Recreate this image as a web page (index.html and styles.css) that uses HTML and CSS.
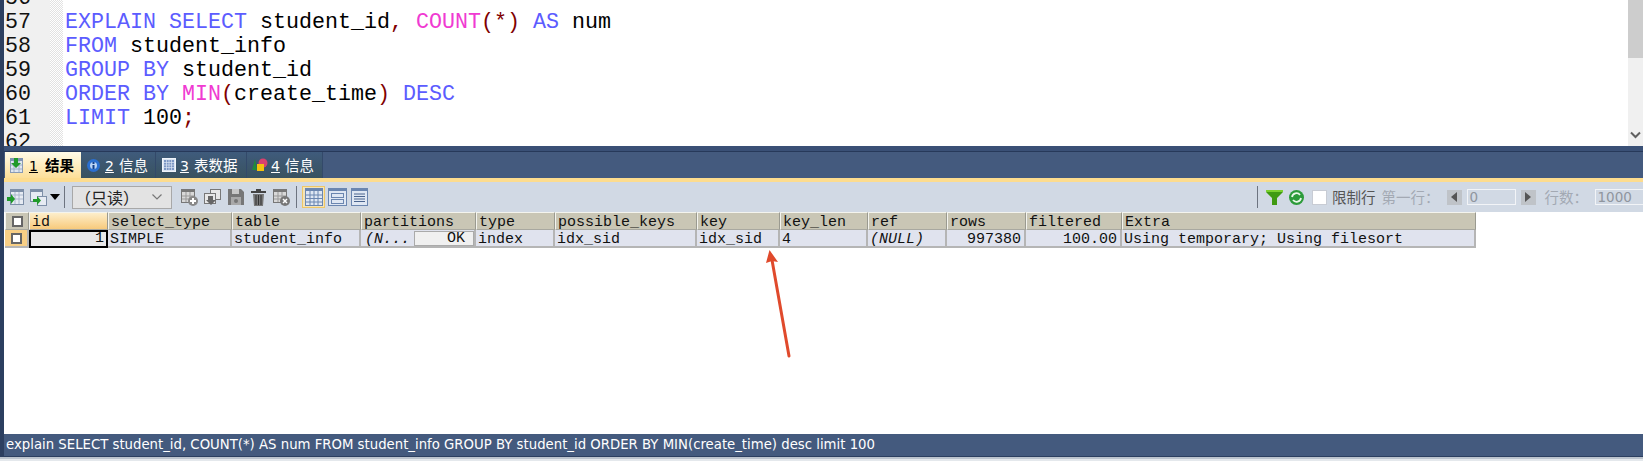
FILE: index.html
```html
<!DOCTYPE html>
<html lang="zh">
<head>
<meta charset="utf-8">
<title>SQLyog</title>
<link rel="stylesheet" href="styles.css">
</head>
<body>
<div class="app">
  <section class="editor">
    <div class="gutter">
      <div>56</div><div>57</div><div>58</div><div>59</div><div>60</div><div>61</div><div>62</div>
    </div>
    <div class="dither"></div>
    <pre class="code"><code>
<b>EXPLAIN</b> <b>SELECT</b> student_id<u>,</u> <i>COUNT</i><u>(*)</u> <b>AS</b> num
<b>FROM</b> student_info
<b>GROUP</b> <b>BY</b> student_id
<b>ORDER</b> <b>BY</b> <i>MIN</i><u>(</u>create_time<u>)</u> <b>DESC</b>
<b>LIMIT</b> 100<u>;</u>
</code></pre>
    <div class="scrollbar">
      <div class="thumb"></div>
      <svg class="chev" width="11" height="8" viewBox="0 0 11 8"><path d="M1 1.5l4.5 4.5 4.5-4.5" fill="none" stroke="#606060" stroke-width="2"/></svg>
    </div>
  </section>

  <div class="band"></div>

  <nav class="tabs">
    <div class="tab active tab1">
      <svg class="tabicon" width="13" height="15" viewBox="0 0 13 15"><rect x=".5" y=".5" width="12" height="14" fill="#dfe6f0" stroke="#8a9bb5"/><rect width="13" height="3" fill="#7f93b3"/><path d="M1 7h11M1 11h11M4 3v11M9 3v11" stroke="#9fb0c8"/><path d="M4 0h4v5h3l-5 5-5-5h3z" fill="#1f9a2a"/></svg>
      <span class="tablabel strong"><span class="num">1</span>结果</span>
    </div>
    <div class="tab tab2">
      <svg class="tabicon" width="13" height="13" viewBox="0 0 13 13"><circle cx="6.500" cy="6.500" r="6.500" fill="#2b6fd0"/><circle cx="6.500" cy="6.500" r="3.500" fill="#bcd4f5"/><rect x="5.500" y="3" width="2" height="2" fill="#123f8c"/><rect x="5.500" y="6" width="2" height="4" fill="#123f8c"/></svg>
      <span class="tablabel"><span class="num">2</span>信息</span>
    </div>
    <div class="tab tab3">
      <svg class="tabicon" width="14" height="14" viewBox="0 0 14 14"><rect x=".5" y=".5" width="13" height="13" fill="#dbe5f3" stroke="#f0f4fa"/><rect x="2" y="2" width="10" height="10" fill="#7b96c4"/><path d="M2 4.500h10M2 7h10M2 9.500h10M4.500 2v10M7 2v10M9.500 2v10" stroke="#dbe5f3" stroke-width=".7"/></svg>
      <span class="tablabel"><span class="num">3</span>表数据</span>
    </div>
    <div class="tab tab4">
      <svg class="tabicon" width="16" height="14" viewBox="0 0 16 14"><path d="M0 12L3 1l2 11z" fill="#1f8a3c"/><circle cx="11" cy="5" r="4.500" fill="#d9406f"/><rect x="5" y="6" width="7" height="7" fill="#f4c20d"/></svg>
      <span class="tablabel"><span class="num">4</span>信息</span>
    </div>
  </nav>
  <div class="tabline"></div>

  <div class="toolbar">
    <svg class="ic ic1" width="17" height="17" viewBox="0 0 17 17"><rect x="3.500" y=".5" width="13" height="15" fill="#e6ebf3" stroke="#7d8fa8"/><rect x="3" y="0" width="14" height="3" fill="#7d8fa8"/><path d="M4 6h12M4 10h12M8 3v12M12 3v12" stroke="#a9b7cb"/><path d="M0 8h4V5l4 5-4 5v-3H0z" fill="#1f9a2a"/></svg>
    <svg class="ic ic2" width="17" height="17" viewBox="0 0 17 17"><rect x=".5" y=".5" width="12" height="12" fill="#e6ebf3" stroke="#7d8fa8"/><rect x="0" y="0" width="13" height="3" fill="#7d8fa8"/><rect x="7.500" y="7.500" width="9" height="9" fill="#e6ebf3" stroke="#7d8fa8"/><path d="M3 10h4V7l4 4.500-4 4.500v-3H3z" fill="#1f9a2a"/></svg>
    <span class="caret"></span>
    <span class="sep sep1"></span>
    <div class="combo">
      <span>（只读）</span>
      <svg width="10" height="6" viewBox="0 0 10 6"><path d="M.5.5L5 5 9.500.5" fill="none" stroke="#777" stroke-width="1.200"/></svg>
    </div>
    <svg class="ic ic3" width="17" height="17" viewBox="0 0 17 17"><rect x=".5" y=".5" width="13" height="13" fill="#d8d8d8" stroke="#777"/><rect y="0" width="14" height="3" fill="#777"/><path d="M1 7h12M1 10h12M5 3v10M9 3v10" stroke="#999"/><circle cx="12" cy="12" r="5" fill="#888"/><path d="M9 12h6M12 9v6" stroke="#fff" stroke-width="2"/></svg>
    <svg class="ic ic4" width="17" height="17" viewBox="0 0 17 17"><rect x="6.500" y=".5" width="10" height="10" fill="#e8e8e8" stroke="#777"/><rect x=".5" y="4.500" width="11" height="10" fill="#e8e8e8" stroke="#777"/><path d="M4 7h5v4h3l-5 5-5-5h2z" fill="#666"/></svg>
    <svg class="ic ic5" width="16" height="16" viewBox="0 0 16 16"><path d="M0 0h13l3 3v13H0z" fill="#777"/><rect x="4" y="0" width="7" height="5" fill="#c8c8c8"/><rect x="3" y="8" width="10" height="8" fill="#a9a9a9"/><circle cx="8" cy="12" r="2" fill="#777"/></svg>
    <svg class="ic ic6" width="15" height="17" viewBox="0 0 15 17"><rect x="0" y="2" width="15" height="2" fill="#444"/><rect x="5" y="0" width="5" height="2" fill="#444"/><path d="M2 5h11l-1 12H3z" fill="#777"/><path d="M5 6v10M7.500 6v10M10 6v10" stroke="#333"/></svg>
    <svg class="ic ic7" width="17" height="17" viewBox="0 0 17 17"><rect x=".5" y=".5" width="13" height="13" fill="#d8d8d8" stroke="#777"/><rect y="0" width="14" height="3" fill="#777"/><path d="M1 7h12M1 10h12M5 3v10M9 3v10" stroke="#999"/><circle cx="12" cy="12" r="5" fill="#777"/><path d="M10 10l4 4M14 10l-4 4" stroke="#fff" stroke-width="1.500"/></svg>
    <span class="sep sep2"></span>
    <div class="viewbtn on">
      <svg width="18" height="18" viewBox="0 0 18 18"><rect x=".5" y=".5" width="17" height="17" fill="#dfe7f3" stroke="#6b86b0"/><rect width="18" height="3" fill="#6b86b0"/><path d="M1 7h16M1 10.500h16M1 14h16M5 3v15M9 3v15M13 3v15" stroke="#6b86b0"/></svg>
    </div>
    <div class="viewbtn v2">
      <svg width="19" height="18" viewBox="0 0 19 18"><rect x=".5" y=".5" width="18" height="17" fill="#dfe7f3" stroke="#6b86b0"/><rect width="19" height="3" fill="#6b86b0"/><rect x="3.500" y="5.500" width="12" height="4" fill="none" stroke="#6b86b0"/><rect x="3.500" y="11.500" width="12" height="4" fill="none" stroke="#6b86b0"/></svg>
    </div>
    <div class="viewbtn v3">
      <svg width="17" height="18" viewBox="0 0 17 18"><rect x=".5" y=".5" width="16" height="17" fill="#dfe7f3" stroke="#6b86b0"/><rect width="17" height="3" fill="#6b86b0"/><path d="M3 6h11M3 8.500h11M3 11h11M3 13.500h11" stroke="#4a648e"/></svg>
    </div>

    <div class="tools-right">
      <span class="sep"></span>
      <svg class="funnel" width="17" height="15" viewBox="0 0 17 15"><path d="M0 0h17v2l-6 6v7H6V8L0 2z" fill="#3f9a12"/><path d="M0 0h17v2H0z" fill="#7bd030"/></svg>
      <svg class="refresh" width="15" height="15" viewBox="0 0 15 15"><circle cx="7.500" cy="7.500" r="7.500" fill="#2c9b3a"/><path d="M3 7a4.500 4.500 0 0 1 8-2M12 8a4.500 4.500 0 0 1-8 2" fill="none" stroke="#e8f8e8" stroke-width="1.800"/></svg>
      <span class="check"></span>
      <span class="lbl dark">限制行</span>
      <span class="lbl first">第一行：</span>
      <span class="stepper"><span class="tri left"></span></span>
      <span class="num-input w48">0</span>
      <span class="stepper"><span class="tri right"></span></span>
      <span class="lbl rowsl">行数：</span>
      <span class="num-input last">1000</span>
    </div>
  </div>

  <main class="results">
    <div class="grid">
      <div class="h corner"><span class="box"></span></div>
      <div class="h sel">id</div>
      <div class="h">select_type</div>
      <div class="h">table</div>
      <div class="h">partitions</div>
      <div class="h">type</div>
      <div class="h">possible_keys</div>
      <div class="h">key</div>
      <div class="h">key_len</div>
      <div class="h">ref</div>
      <div class="h">rows</div>
      <div class="h">filtered</div>
      <div class="h">Extra</div>

      <div class="c mark"><span class="box"></span></div>
      <div class="c focus r">1</div>
      <div class="c">SIMPLE</div>
      <div class="c">student_info</div>
      <div class="c parts"><em>(N...</em><span class="ok">OK</span></div>
      <div class="c">index</div>
      <div class="c">idx_sid</div>
      <div class="c">idx_sid</div>
      <div class="c">4</div>
      <div class="c"><em>(NULL)</em></div>
      <div class="c r">997380</div>
      <div class="c r">100.00</div>
      <div class="c">Using temporary; Using filesort</div>
    </div>
    <svg class="arrow" width="30" height="112" viewBox="0 0 30 112"><path d="M24 108L7 12" fill="none" stroke="#e04a2c" stroke-width="3" stroke-linecap="round"/><path d="M4.500 2L1 15l6-2 6 1z" fill="#e04a2c"/></svg>
  </main>

  <footer class="status">explain SELECT student_id, COUNT(*) AS num FROM student_info GROUP BY student_id ORDER BY MIN(create_time) desc limit 100</footer>
  <div class="bottom"></div>
</div>
</body>
</html>
```
FILE: styles.css
```css
* { box-sizing: border-box; }
html, body { margin: 0; height: 461px; overflow: hidden; background: #fff; }
.app {
  height: 461px;
  padding-left: 4px;
  display: flex;
  flex-direction: column;
  background: #2c3f60;
  position: relative;
}

/* editor */
.editor { height: 146px; flex: none; display: flex; background: #fff; overflow: hidden; }
.gutter {
  width: 46px;
  flex: none;
  background: #f0f0f0;
  margin-top: -13px;
  padding: 0 0 0 1px;
  font: 21.67px/24px "Liberation Mono", monospace;
  color: #111;
}
.dither {
  width: 13px;
  flex: none;
  background-color: #fff;
  background-image: conic-gradient(#e2e2e2 25%, #fff 0 50%, #e2e2e2 0 75%, #fff 0);
  background-size: 2px 2px;
}
.code {
  flex: 1;
  margin: -13px 0 0 2px;
  font: 21.67px/24px "Liberation Mono", monospace;
  color: #000;
}
.code code { font: inherit; }
.code b { font-weight: normal; color: #5c5cff; }
.code i { font-style: normal; color: #f03ad2; }
.code u { text-decoration: none; color: #800000; }
.scrollbar { width: 15px; flex: none; background: #f0f0f0; position: relative; }
.thumb { height: 58px; background: #cdcdcd; }
.chev { position: absolute; left: 2px; top: 131px; }

/* tabs */
.band { height: 6px; flex: none; background: #3a5076; border-bottom: 1px solid #27395a; }
.tabs { height: 26px; flex: none; display: flex; align-items: stretch; background: #445a7e; padding-left: 1px; }
.tab {
  display: flex;
  align-items: center;
  color: #fff;
  background: linear-gradient(#3f5b7c, #39525f);
  border-right: 1px solid #33496a;
}
.tab.active { background: linear-gradient(#fffbe9, #fddf98); color: #000; border-right: 0; }
.tab1 { width: 76px; padding-left: 5px; gap: 6px; }
.tab2 { width: 75px; padding-left: 6px; gap: 5px; }
.tab3 { width: 91px; padding-left: 6px; gap: 4px; }
.tab4 { width: 76px; padding-left: 5px; gap: 3px; }
.tabicon { flex: none; }
.tablabel {
  font: 14.5px/20px "Noto Sans CJK SC", sans-serif;
  white-space: nowrap;
}
.tablabel.strong { font-size: 14.5px; font-weight: 700; }
.num {
  font: 14px/20px "DejaVu Sans", sans-serif;
  text-decoration: underline;
  margin-right: 5px;
}
.tab.active .num { font-weight: 400; margin-right: 7px; }
.tabline { height: 4px; flex: none; background: #fddc8e; }

/* toolbar */
.toolbar {
  height: 30px;
  flex: none;
  display: flex;
  align-items: center;
  background: #d1d9e4;
  padding-left: 3px;
}
.ic { flex: none; }
.ic2 { margin-left: 6px; }
.caret {
  margin-left: 3px;
  width: 0; height: 0;
  border: 5px solid transparent;
  border-top: 6px solid #000;
  border-bottom: 0;
}
.sep { width: 1px; height: 22px; background: #6d7480; flex: none; }
.sep1 { margin-left: 4px; }
.combo {
  margin-left: 7px;
  width: 100px;
  height: 23px;
  display: flex;
  align-items: center;
  justify-content: space-between;
  padding: 0 9px 0 2px;
  background: #e3e3e3;
  border: 1px solid #a8a8a8;
  font: 16px/20px "Noto Sans CJK SC", sans-serif;
  color: #222;
  flex: none;
}
.ic3 { margin-left: 9px; }
.ic4 { margin-left: 6px; }
.ic5 { margin-left: 7px; }
.ic6 { margin-left: 7px; }
.ic7 { margin-left: 7px; }
.sep2 { margin-left: 6px; }
.viewbtn { flex: none; display: flex; align-items: center; justify-content: center; height: 22px; }
.viewbtn.on { margin-left: 5px; width: 23px; background: #f3e4b9; border: 1px solid #f0c766; }
.v2 { margin-left: 3px; }
.v3 { margin-left: 4px; }
.tools-right { margin-left: auto; display: flex; align-items: center; flex: none; width: 386px; overflow: hidden; }
.funnel { margin-left: 8px; flex: none; }
.refresh { margin-left: 6px; flex: none; }
.check { margin-left: 8px; width: 15px; height: 15px; background: #fff; border: 1px solid #c8ccd4; flex: none; }
.lbl { font: 14.5px/20px "Noto Sans CJK SC", sans-serif; color: #a3a9b3; white-space: nowrap; flex: none; }
.lbl.dark { margin-left: 5px; color: #555; }
.first { margin-left: 6px; width: 60px; }
.rowsl { margin-left: 9px; width: 50px; }
.stepper {
  width: 15px; height: 15px; flex: none;
  background: #bfc3c8;
  display: flex; align-items: center; justify-content: center;
  margin-left: 5px;
}
.tri { width: 0; height: 0; border: 5px solid transparent; border-left-width: 0; border-right: 6px solid #555; }
.tri.right { border-right-width: 0; border-left: 6px solid #555; border-left-width: 6px; border-right: 0; }
.num-input {
  height: 16px;
  flex: none;
  margin-left: 5px;
  border: 1px solid #f2f4f7;
  color: #8f959e;
  font: 13.5px/14px "DejaVu Sans", sans-serif;
  padding-left: 2px;
}
.w48 { width: 49px; }
.last { width: 60px; margin-left: 0; }

/* results */
.results { flex: 1; background: #fff; padding-left: 1px; position: relative; min-height: 0; }
.grid {
  display: grid;
  grid-template-columns: 24px 79px 124px 129px 115px 79px 142px 83px 88px 79px 79px 96px 354px;
  grid-template-rows: 18px 18px;
  width: 1471px;
  font: 15px/15px "Liberation Mono", monospace;
  color: #111;
}
.h {
  background: #c9c6b5;
  border: 1px solid #f4f4ee;
  border-right-color: #9a9a90;
  border-bottom-color: #a8a8a0;
  padding: 2px 0 0 2px;
  white-space: nowrap;
}
.h.sel { background: linear-gradient(#fdeecb, #f8ca7c); }
.corner, .mark { display: flex; align-items: center; justify-content: center; padding: 0; }
.c {
  background: #e0e3ee;
  border-right: 2px solid #b5b5b5;
  border-bottom: 2px solid #b5b5b5;
  padding: 2px 0 0 2px;
  white-space: nowrap;
  overflow: hidden;
}
.c.mark { background: #f8cf85; padding: 0; }
.box { width: 11px; height: 11px; background: #fff; border: 2px solid #666; }
.c.r { text-align: right; padding: 2px 3px 0 0; }
.c.focus { background: #e8e8e8; border: 2px solid #000; padding: 0 2px 0 0; line-height: 14px; }
em { font-style: italic; }
.parts { display: flex; justify-content: space-between; padding-right: 0; }
.parts em { margin-left: 2px; }
.ok {
  width: 60px;
  height: 15px;
  margin-top: -1px;
  background: #f0f0f0;
  border: 1px solid #aaa;
  text-align: right;
  padding-right: 8px;
  line-height: 14px;
}
.arrow { position: absolute; left: 761px; top: 36px; }

/* status */
.status {
  height: 22px;
  flex: none;
  background: #445a7e;
  color: #fff;
  font: 13.27px/22px "DejaVu Sans", sans-serif;
  padding-left: 2px;
  white-space: nowrap;
  overflow: hidden;
}
.bottom { height: 5px; flex: none; background: linear-gradient(#2c3f60 0 1px, #bcc4ce 1px 3px, #e4e8ec 3px); margin-left: -4px; }
```
